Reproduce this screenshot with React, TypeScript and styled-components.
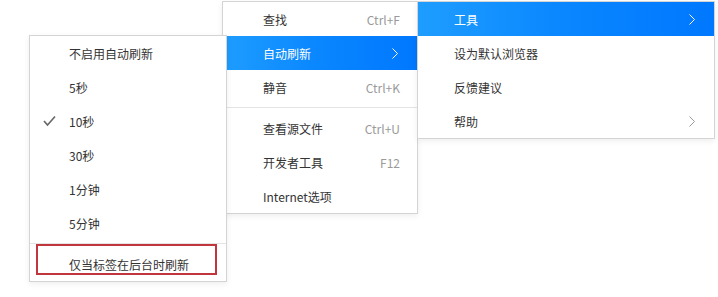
import React from "react";
import styled, { createGlobalStyle, css } from "styled-components";

const Global = createGlobalStyle`
  html, body { margin: 0; padding: 0; background: #fff; }
  body { font-family: "Noto Sans CJK SC", "Noto Sans", sans-serif; }
`;

const Canvas = styled.div`
  position: relative;
  width: 718px;
  height: 297px;
  overflow: hidden;
  background: #fff;
`;

const Menu = styled.div<{ $left: number; $top: number; $width: number; $z: number }>`
  position: absolute;
  left: ${(p) => p.$left}px;
  top: ${(p) => p.$top}px;
  width: ${(p) => p.$width}px;
  z-index: ${(p) => p.$z};
  box-sizing: border-box;
  background: #fff;
  border: 1px solid #d4d4d4;
  box-shadow: 0 2px 6px rgba(0, 0, 0, 0.07);
  display: flex;
  flex-direction: column;
`;

const Row = styled.div<{ $active?: boolean; $pad: number }>`
  position: relative;
  height: 34px;
  display: flex;
  align-items: center;
  padding-left: ${(p) => p.$pad}px;
  padding-right: 17px;
  font-size: 12px;
  color: #333;
  ${(p) =>
    p.$active &&
    css`
      background: linear-gradient(90deg, #1e9dff 0%, #0a86ff 50%, #0078ff 100%);
      color: #fff;
    `}
`;

const CheckSlot = styled.span<{ $width: number }>`
  width: ${(p) => p.$width}px;
  flex: none;
  display: flex;
  align-items: center;
`;

const Label = styled.span`
  flex: 1;
  white-space: nowrap;
`;

const Shortcut = styled.span`
  color: #9a9a9a;
  font-size: 12px;
  white-space: nowrap;
`;

const Separator = styled.div`
  height: 7px;
  display: flex;
  align-items: center;
  &::after {
    content: "";
    flex: 1;
    height: 1px;
    background: #e4e4e4;
  }
`;

const Mark = styled.div`
  position: absolute;
  left: 6px;
  right: 9px;
  top: -3px;
  bottom: 6px;
  border: 2px solid #c1363d;
  box-sizing: border-box;
  pointer-events: none;
`;

const Chevron = ({ color }: { color: string }) => (
  <svg width="6" height="11" viewBox="0 0 6 11" style={{ marginRight: 2 }}>
    <polyline points="0.5,0.5 5.5,5.5 0.5,10.5" fill="none" stroke={color} strokeWidth="1" />
  </svg>
);

const Check = () => (
  <svg width="13" height="12" viewBox="0 0 13 12">
    <polyline points="1,6 4.5,10 12,1.5" fill="none" stroke="#666" strokeWidth="1.6" />
  </svg>
);

type Item =
  | { sep: true }
  | { sep?: false; label: string; shortcut?: string; sub?: boolean; active?: boolean; checked?: boolean; marked?: boolean };

const refreshItems: Item[] = [
  { label: "不启用自动刷新" },
  { label: "5秒" },
  { label: "10秒", checked: true },
  { label: "30秒" },
  { label: "1分钟" },
  { label: "5分钟" },
  { sep: true },
  { label: "仅当标签在后台时刷新", marked: true },
];

const mainItems: Item[] = [
  { label: "查找", shortcut: "Ctrl+F" },
  { label: "自动刷新", sub: true, active: true },
  { label: "静音", shortcut: "Ctrl+K" },
  { sep: true },
  { label: "查看源文件", shortcut: "Ctrl+U" },
  { label: "开发者工具", shortcut: "F12" },
  { label: "Internet选项" },
];

const toolItems: Item[] = [
  { label: "工具", sub: true, active: true },
  { label: "设为默认浏览器" },
  { label: "反馈建议" },
  { label: "帮助", sub: true },
];

const renderItems = (items: Item[], pad: number, checkWidth = 0) =>
  items.map((it, i) =>
    it.sep ? (
      <Separator key={i} />
    ) : (
      <Row key={i} $active={it.active} $pad={pad}>
        {checkWidth > 0 && <CheckSlot $width={checkWidth}>{it.checked && <Check />}</CheckSlot>}
        <Label>{it.label}</Label>
        {it.shortcut && <Shortcut>{it.shortcut}</Shortcut>}
        {it.sub && <Chevron color={it.active ? "#fff" : "#999"} />}
        {it.marked && <Mark />}
      </Row>
    )
  );

export default function App() {
  return (
    <>
      <Global />
      <Canvas>
        <Menu $left={222} $top={1} $width={196} $z={1}>
          {renderItems(mainItems, 40)}
        </Menu>
        <Menu $left={417} $top={1} $width={298} $z={1}>
          {renderItems(toolItems, 36)}
        </Menu>
        <Menu $left={29} $top={35} $width={198} $z={2}>
          {renderItems(refreshItems, 13, 26)}
        </Menu>
      </Canvas>
    </>
  );
}
